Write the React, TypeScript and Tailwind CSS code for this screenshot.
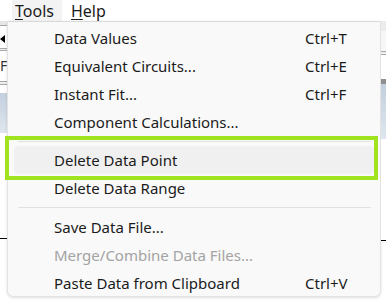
import React from "react";

type Item = { label: string; shortcut?: string; disabled?: boolean; active?: boolean };

const groups: Item[][] = [
  [
    { label: "Data Values", shortcut: "Ctrl+T" },
    { label: "Equivalent Circuits...", shortcut: "Ctrl+E" },
    { label: "Instant Fit...", shortcut: "Ctrl+F" },
    { label: "Component Calculations..." },
  ],
  [
    { label: "Delete Data Point", active: true },
    { label: "Delete Data Range" },
  ],
  [
    { label: "Save Data File..." },
    { label: "Merge/Combine Data Files...", disabled: true },
    { label: "Paste Data from Clipboard", shortcut: "Ctrl+V" },
  ],
];

const MenuRow = ({ item }: { item: Item }) => (
  <div
    className={
      "mx-[6px] flex h-[28px] items-center rounded-[4px] pl-[40px] " +
      (item.active ? "bg-[#f0f0f0]" : "")
    }
  >
    <span className={"w-[251px] " + (item.disabled ? "text-[#a3a3a3]" : "text-[#1b1b1b]")}>
      {item.label}
    </span>
    {item.shortcut && <span className="text-[#1b1b1b]">{item.shortcut}</span>}
  </div>
);

const App = () => {
  return (
    <div className="relative flex h-[300px] w-[386px] flex-col overflow-hidden bg-white font-['Noto_Sans',sans-serif] text-[15px]">
      {/* menu bar */}
      <div className="flex h-[21px] items-center text-[16px] text-[#1b1b1b]">
        <div className="ml-[12px] flex h-full items-center bg-[#f3f3f3] px-[3px] pr-[8px]">
          <span>
            <span className="underline underline-offset-2">T</span>ools
          </span>
        </div>
        <div className="ml-[6px] px-[3px]">
          <span className="underline underline-offset-2">H</span>elp
        </div>
      </div>

      <div className="flex flex-1">
        {/* app content peeking on the left */}
        <div className="flex w-[7px] flex-col">
          <div className="h-[5px] border-b border-[#a9a9a9] bg-[#e6e6e6]" />
          <div className="h-[8px] bg-white" />
          <div className="flex h-[10px] items-center">
            <div className="h-0 w-0 border-y-[4px] border-r-[5px] border-y-transparent border-r-black" />
          </div>
          <div className="mt-[4px] h-[3px] border-y border-[#a9a9a9] bg-[#efefef]" />
          <div className="flex h-[30px] items-center text-[14px] leading-none text-[#333]">F</div>
          <div className="h-[4px] border-y border-[#a9a9a9] bg-[#efefef]" />
          <div className="h-[8px] bg-white" />
          <div className="h-[40px] bg-gradient-to-b from-[#c3d0de] to-[#dfe6ee]" />
          <div className="h-[105px] bg-white" />
          <div className="h-px bg-black" />
        </div>

        {/* dropdown */}
        <div className="flex h-[276px] w-[374px] flex-col rounded-b-[6px] border border-t-[#d9d9d9] border-[#e3e3e3] bg-[#f9f9f9] pt-[2px] shadow-[0_1px_3px_rgba(0,0,0,0.12)]">
          {groups.map((g, gi) => (
            <div key={gi}>
              {gi > 0 && (
                <div className={"flex items-center " + (gi === 1 ? "h-[10px]" : "h-[11px]")}>
                  <div className="ml-[10px] h-px w-[353px] bg-[#e1e1e1]" />
                </div>
              )}
              {g.map((it) => (
                <MenuRow key={it.label} item={it} />
              ))}
            </div>
          ))}
        </div>

        {/* app content peeking on the right */}
        <div className="flex flex-1 flex-col">
          <div className="h-[10px] bg-[#ececec]" />
          <div className="h-[20px] bg-[#f7f7f7]" />
          <div className="h-[4px] border-y border-[#a9a9a9] bg-[#efefef]" />
          <div className="h-[24px] bg-white" />
          <div className="h-[5px] bg-[#8f8f8f]" />
          <div className="h-[55px] bg-gradient-to-b from-[#c3d0de] to-[#dfe6ee]" />
          <div className="h-[101px] bg-white" />
          <div className="h-px bg-black" />
        </div>
      </div>

      {/* annotation box */}
      <div className="absolute left-[5px] top-[136px] h-[44px] w-[373px] border-[4px] border-[#a2e31f]" />
    </div>
  );
};

export default App;
